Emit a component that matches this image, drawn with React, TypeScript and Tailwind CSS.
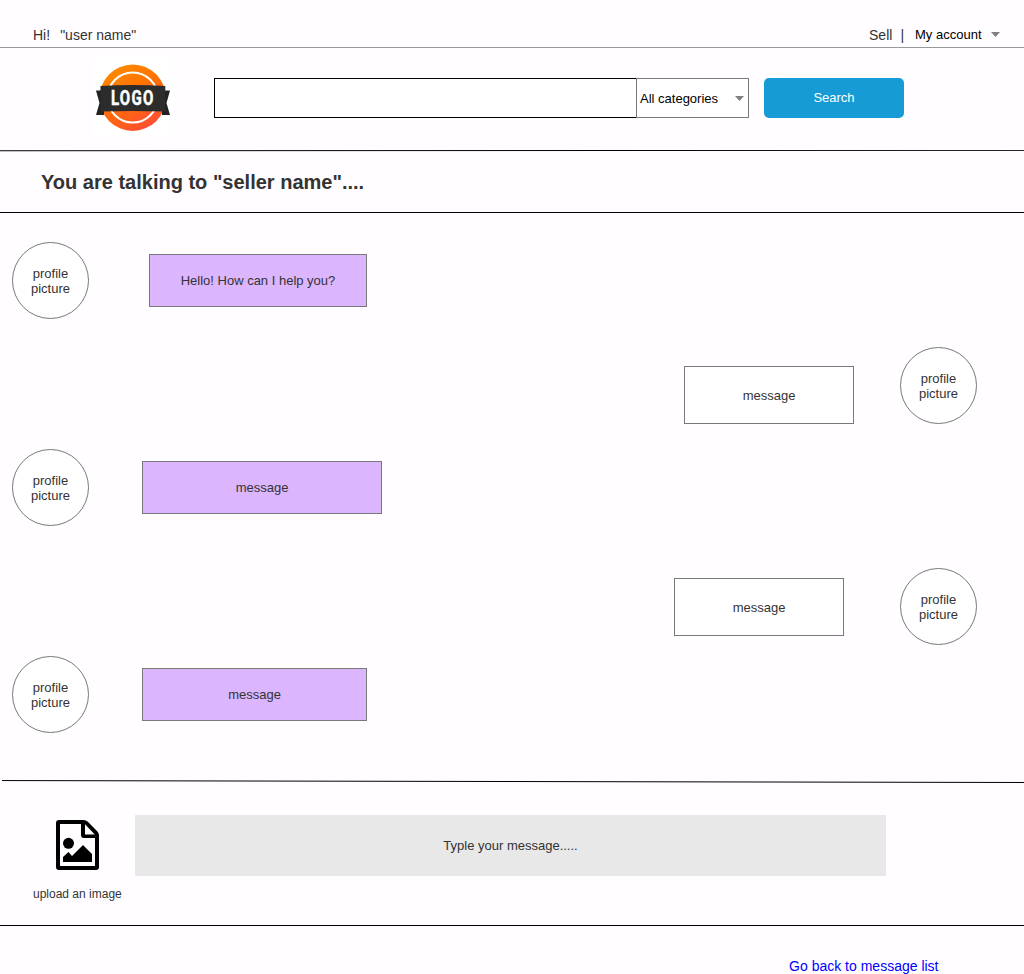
import React from "react";

type Message = {
  text: string;
  mine: boolean;
  row: string;
  bubble: string;
};

const messages: Message[] = [
  { text: "Hello! How can I help you?", mine: false, row: "mt-[29px] ml-3", bubble: "ml-[60px] mt-3 w-[218px]" },
  { text: "message", mine: true, row: "mt-7 mr-[47px]", bubble: "mr-[46px] mt-[19px]" },
  { text: "message", mine: false, row: "mt-[25px] ml-3", bubble: "ml-[53px] mt-3 w-60" },
  { text: "message", mine: true, row: "mt-[42px] mr-[47px]", bubble: "mr-14 mt-2.5" },
  { text: "message", mine: false, row: "mt-[11px] ml-3", bubble: "ml-[53px] mt-3 w-[225px]" },
];

function Caret() {
  return (
    <svg width="9" height="5" viewBox="0 0 9 5" className="shrink-0">
      <path d="M0 0H9L4.5 5Z" fill="#808080" />
    </svg>
  );
}

function Logo() {
  return (
    <svg width="82" height="82" viewBox="0 0 82 82" className="shrink-0">
      <defs>
        <linearGradient id="badge" x1="0" y1="0" x2="0.6" y2="1">
          <stop offset="0" stopColor="#ff9200" />
          <stop offset="0.5" stopColor="#ff7200" />
          <stop offset="1" stopColor="#ff5030" />
        </linearGradient>
      </defs>
      <rect width="82" height="82" fill="#fff" />
      <circle cx="40.7" cy="40.7" r="33.2" fill="url(#badge)" />
      <circle cx="40.7" cy="40.5" r="25" fill="none" stroke="#fff" strokeWidth="2" />
      <path d="M4 33.5H12V58H4L7.5 46Z M78 33.5H70V58H78L74.5 46Z" fill="#222" />
      <path d="M8.5 29Q41 27 73.3 29V54.5Q41 53.5 8.5 54.5Z" fill="#2c2c2c" />
      <text
        transform="translate(18.9 48.2) scale(0.77 1)"
        fill="#fff"
        stroke="#fff"
        strokeWidth="0.5"
        fontFamily="Roboto, sans-serif"
        fontWeight="700"
        fontSize="19.5"
        letterSpacing="1.7"
      >
        LOGO
      </text>
    </svg>
  );
}

function ImageFileIcon() {
  return (
    <svg width="43" height="50" viewBox="0 0 43 50" className="ml-[23px]">
      <path
        fillRule="evenodd"
        d="M3 0H27.5Q30 0 31.8 1.8L41.2 11.2Q43 13 43 15.5V47Q43 50 40 50H3Q0 50 0 47V3Q0 0 3 0ZM4 4V46H39V18H28Q25 18 25 15V4ZM29 4.3V14.5H38.8Z"
      />
      <circle cx="12.5" cy="23.3" r="5.5" />
      <path d="M7 42V37L12.5 32L16 36L27 25L36 34V42Z" />
    </svg>
  );
}

function Avatar() {
  return (
    <div className="flex h-[77px] w-[77px] shrink-0 items-center justify-center rounded-full border border-[#797979] bg-white text-center text-[13px] leading-[15px]">
      profile
      <br />
      picture
    </div>
  );
}

function MessageRow({ message }: { message: Message }) {
  return (
    <div className={`flex items-start ${message.mine ? "flex-row-reverse" : ""} ${message.row}`}>
      <Avatar />
      <div
        className={`flex items-center justify-center border border-[#797979] text-[13px] leading-[15px] ${
          message.mine ? "h-[58px] w-[170px] bg-white" : "h-[53px] bg-[#dcb5ff]"
        } ${message.bubble}`}
      >
        {message.text}
      </div>
    </div>
  );
}

export default function App() {
  return (
    <div className="flex h-[974px] w-[1024px] flex-col overflow-hidden bg-[#fffdff] font-['Liberation_Sans',Arial,sans-serif] text-[#333]">
      <div className="flex h-12 shrink-0 justify-between border-b border-[#999] pl-[33px] pr-6 pt-[27px] text-sm leading-4">
        <div className="flex gap-[10px]">
          <span>Hi!</span>
          <span>"user name"</span>
        </div>
        <div className="flex">
          <span>Sell</span>
          <span className="ml-2">|</span>
          <button className="ml-[11px] flex h-[15px] items-center gap-[9.5px] text-[13px] leading-[15px] text-black">
            <span>My account</span>
            <Caret />
          </button>
        </div>
      </div>

      <header className="flex h-[102px] shrink-0 items-start pl-[92px] pt-[9px]">
        <Logo />
        <div className="ml-10 mt-[21px] flex h-10">
          <input aria-label="Search" className="w-[422px] border border-r-0 border-black bg-white px-2 outline-none" />
          <button className="flex w-[113px] items-center justify-between border border-[#797979] bg-white pl-[3px] pr-1 text-[13px] leading-[15px] text-black">
            <span>All categories</span>
            <Caret />
          </button>
          <button className="ml-[15px] w-[140px] rounded-[5px] bg-[#169bd5] pb-px text-[13px] leading-[15px] text-white">
            Search
          </button>
        </div>
      </header>

      <svg width="1024" height="2" viewBox="0 0 1024 2" className="shrink-0">
        <line x1="0" y1="0.75" x2="1024" y2="0.35" stroke="#000" />
      </svg>
      <div className="flex h-[61px] shrink-0 items-center border-b border-black pb-px pl-[41px]">
        <h1 className="text-xl font-bold leading-6">You are talking to "seller name"....</h1>
      </div>

      <main className="h-[567px] shrink-0">
        <div className="flex flex-col">
          {messages.map((message, i) => (
            <MessageRow key={i} message={message} />
          ))}
        </div>
      </main>

      <svg width="1024" height="3" viewBox="0 0 1024 3" className="shrink-0">
        <line x1="2" y1="0.55" x2="1024" y2="2.5" stroke="#000" />
      </svg>
      <section className="flex h-[143px] shrink-0 items-start border-b border-black pl-[33px]">
        <div className="mt-[37px] w-[102px]">
          <ImageFileIcon />
          <div className="mt-[17px] text-xs leading-[14px]">upload an image</div>
        </div>
        <div className="mt-8 flex h-[61px] w-[751px] items-center justify-center bg-[#e8e8e8] text-[13px] leading-[15px]">
          Typle your message.....
        </div>
      </section>

      <footer className="flex grow justify-end pr-[85.5px] pt-8">
        <a href="#" className="h-4 text-sm leading-4 text-[#0000ff]">
          Go back to message list
        </a>
      </footer>
    </div>
  );
}
